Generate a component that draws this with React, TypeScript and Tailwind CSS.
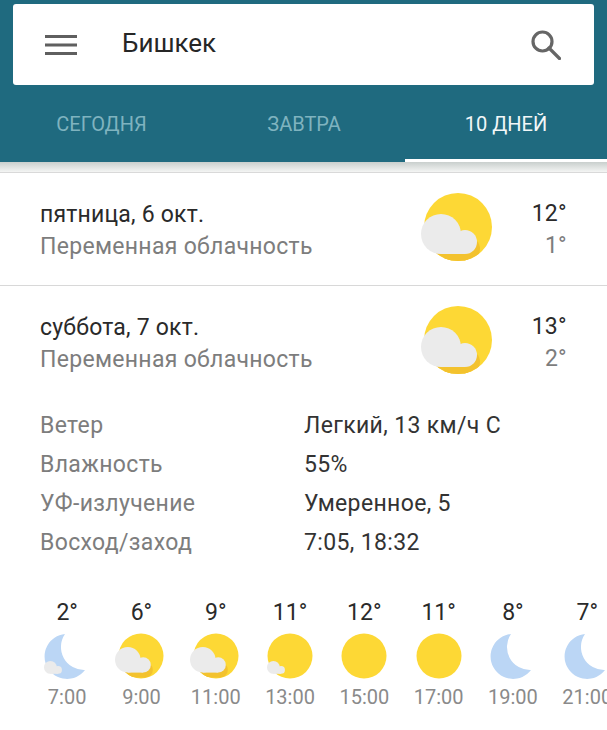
import React from "react";

const Cloud = ({ x, y, s, fill = "#ebebeb" }: { x: number; y: number; s: number; fill?: string }) => (
  <g transform={`translate(${x} ${y}) scale(${s})`} fill={fill}>
    <circle cx="20" cy="20" r="20" />
    <circle cx="44" cy="28" r="12" />
    <rect x="20" y="22" width="24" height="18" />
  </g>
);

type Kind = "moonc" | "bigc" | "smallc" | "sun" | "moon";

const BigSun = () => (
  <svg width="68" height="68" viewBox="0 0 68 68" className="overflow-visible">
    <defs>
      <clipPath id="bigclip">
        <circle cx="34" cy="34" r="34" />
      </clipPath>
    </defs>
    <circle cx="34" cy="34" r="34" fill="#fdd835" />
    <g clipPath="url(#bigclip)">
      <Cloud x={0} y={28} s={1} fill="#f3c22e" />
    </g>
    <Cloud x={-3} y={21} s={1} />
  </svg>
);

const SmallIcon = ({ kind }: { kind: Kind }) => {
  if (kind === "moon" || kind === "moonc")
    return (
      <svg width="46" height="46" viewBox="0 0 46 46" className="overflow-visible">
        <path d="M21 1A22.5 22.5 0 1 0 41 37A23 23 0 0 1 21 1Z" fill="#bbd6f5" />
        {kind === "moonc" && <Cloud x={0} y={28} s={0.32} />}
      </svg>
    );
  return (
    <svg width="46" height="46" viewBox="0 0 46 46" className="overflow-visible">
      <defs>
        <clipPath id="smallclip">
          <circle cx="23" cy="23" r="22.5" />
        </clipPath>
      </defs>
      <circle cx="23" cy="23" r="22.5" fill="#fdd835" />
      {kind === "bigc" && (
        <>
          <g clipPath="url(#smallclip)">
            <Cloud x={-1} y={19} s={0.64} fill="#f3c22e" />
          </g>
          <Cloud x={-3} y={14} s={0.64} />
        </>
      )}
      {kind === "smallc" && <Cloud x={0} y={28} s={0.32} />}
    </svg>
  );
};

const days = [
  { d: "пятница, 6 окт.", hi: "12°", lo: "1°" },
  { d: "суббота, 7 окт.", hi: "13°", lo: "2°" },
];

const details = [
  ["Ветер", "Легкий, 13 км/ч С"],
  ["Влажность", "55%"],
  ["УФ-излучение", "Умеренное, 5"],
  ["Восход/заход", "7:05, 18:32"],
];

const hours: { t: string; h: string; k: Kind }[] = [
  { t: "2°", h: "7:00", k: "moonc" },
  { t: "6°", h: "9:00", k: "bigc" },
  { t: "9°", h: "11:00", k: "bigc" },
  { t: "11°", h: "13:00", k: "smallc" },
  { t: "12°", h: "15:00", k: "sun" },
  { t: "11°", h: "17:00", k: "sun" },
  { t: "8°", h: "19:00", k: "moon" },
  { t: "7°", h: "21:00", k: "moon" },
];

const DayRow = ({ d, hi, lo }: { d: string; hi: string; lo: string }) => (
  <div className="flex h-[112px] items-start pl-[40px] pr-[40px]">
    <div className="flex-1 pt-[26px]">
      <div className="text-[23px] leading-[32px] tracking-[0.2px] text-[#2a2a2a]">{d}</div>
      <div className="text-[23px] leading-[32px] tracking-[0.3px] text-[#7d7d7d]">Переменная облачность</div>
    </div>
    <div className="mr-[39px] mt-[20px] h-[68px] w-[68px]">
      <BigSun />
    </div>
    <div className="w-[36px] pt-[25px] text-right">
      <div className="text-[23px] leading-[32px] tracking-[0.3px] text-[#2a2a2a]">{hi}</div>
      <div className="text-[23px] leading-[32px] tracking-[0.3px] text-[#7d7d7d]">{lo}</div>
    </div>
  </div>
);

export default function App() {
  return (
    <div className="h-[730px] w-[607px] overflow-hidden bg-white font-['Roboto',sans-serif]">
      <div className="bg-[#1f6a7f] px-[13px] pt-[4px]">
        <div className="flex h-[81px] items-center rounded-[3px] bg-white pl-[32px] pr-[33px]">
          <svg width="32" height="22" viewBox="0 0 32 22">
            <path d="M0 2.5H32M0 11H32M0 19.5H32" stroke="#5f5f5f" strokeWidth="3" />
          </svg>
          <span className="ml-[45px] flex-1 pb-[2px] text-[26px] text-[#262626]">Бишкек</span>
          <svg width="30" height="30" viewBox="0 0 30 30" fill="none" stroke="#666" strokeWidth="3.2">
            <circle cx="11.5" cy="11.5" r="9.5" />
            <path d="M18 18L28.5 28.5" strokeLinecap="round" />
          </svg>
        </div>
      </div>
      <div className="flex h-[77px] bg-[#1f6a7f] text-[20px]">
        <div className="flex w-[203px] items-center justify-center text-[#7fb3bf]">СЕГОДНЯ</div>
        <div className="flex w-[202px] items-center justify-center text-[#7fb3bf]">ЗАВТРА</div>
        <div className="flex flex-1 items-center justify-center border-b-[3px] border-white pt-[3px] text-[#f2f7f8]">10 ДНЕЙ</div>
      </div>
      <div className="h-[11px] border-b border-[#d9d9d9] bg-gradient-to-b from-[#c9cfcd] to-[#f4f5f4]" />
      <DayRow {...days[0]} />
      <div className="h-[1px] bg-[#d8d8d8]" />
      <DayRow {...days[1]} />
      <div className="ml-[40px] mt-[9px] flex flex-col">
        {details.map(([a, b]) => (
          <div key={a} className="flex h-[39px] items-center text-[23px] tracking-[0.35px]">
            <div className="w-[264px] text-[#7d7d7d]">{a}</div>
            <div className="text-[#333]">{b}</div>
          </div>
        ))}
      </div>
      <div className="mt-[35px] flex w-[640px] pl-[30px]">
        {hours.map((x) => (
          <div key={x.h} className="flex w-[74.3px] shrink-0 flex-col items-center">
            <div className="text-[23px] leading-[30px] text-[#2a2a2a]">{x.t}</div>
            <div className="mt-[5px] h-[46px]">
              <SmallIcon kind={x.k} />
            </div>
            <div className="mt-[2px] text-[20px] leading-[32px] text-[#8a8a8a]">{x.h}</div>
          </div>
        ))}
      </div>
    </div>
  );
}
